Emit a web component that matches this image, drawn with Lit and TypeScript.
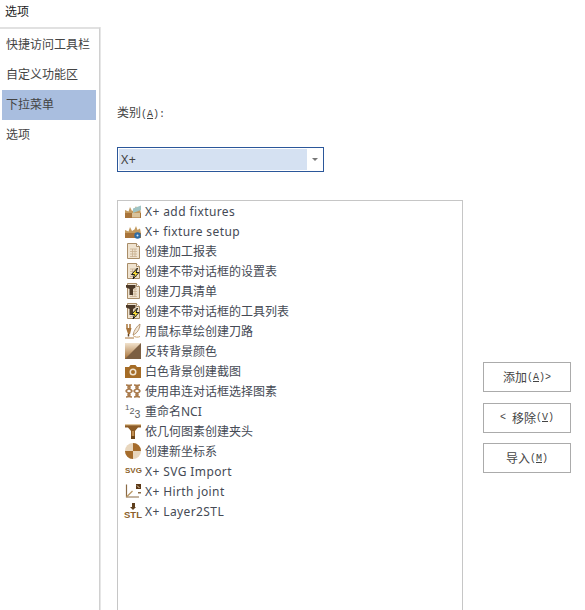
import { LitElement, html, css, svg } from "lit";
import { customElement } from "lit/decorators.js";

const B = "#a8743a", D = "#5f3f1c", T = "#c9a26c";
const doc = svg`<path d="M2.500 .5h9l3 3v12h-12z" fill="#efe3d0" stroke="#a98d68"/><path d="M11.500 .5v3h3" fill="#fff" stroke="#a98d68"/><path d="M5 6h7M5 8.500h7M5 11h7M5 13.500h7M7.500 6v8M10 6v8" stroke="#c8b090" stroke-width=".8"/>`;
const bolt = svg`<path d="M12.500 5l-6 6.500h3L8 16l6-6.500h-3z" fill="#ffe13a" stroke="#1c1c1c" stroke-width="1"/>`;
const tool = svg`<path d="M1 2h9.500v2.500L8 6v6H4.500V6L1 4.500z" fill="#4d3a28"/>`;
const box = svg`<path d="M0 15V7l3.500 1.500L5 4l2 4 2.500-1.500L11 3l1.500 4L15 5.500l1 5V15z" fill="#c39a5e"/><path d="M0 10h16v5H0z" fill="${B}"/>`;

const ICONS = [
  svg`${box}<path d="M8 5.500l8-3V7l-8 3z" fill="#9fc4c4"/><path d="M7 10h8v4.500H7z" fill="#d9c39a"/>`,
  svg`${box}<circle cx="12.500" cy="12.500" r="3.200" fill="#2e6da4"/><circle cx="12.500" cy="12.500" r="1" fill="#d7e6f2"/>`,
  doc,
  svg`${doc}${bolt}`,
  svg`${doc}${tool}`,
  svg`${doc}${tool}${bolt}`,
  svg`<path d="M2 1v4M5 1v4" stroke="${B}" stroke-width="1.500"/><path d="M1 5h5.500L5 11H3z" fill="${B}"/><path d="M3.500 11v2.500" stroke="${D}" stroke-width="1.500"/><path d="M0 15h9" stroke="${B}"/><path d="M8 12C9 7 12 3 15 1c0 4-2 8-5 10z" fill="#f3e7d6" stroke="#a9875e" stroke-width=".8"/><path d="M8 12.500c2 2 5 2 7 1" fill="none" stroke="${T}"/>`,
  svg`<defs><linearGradient id="g1" x1="0" y1="0" x2="0" y2="1"><stop offset="0" stop-color="#f1e2cd"/><stop offset="1" stop-color="#a56f35"/></linearGradient></defs><path d="M0 0h16v16H0z" fill="url(#g1)"/><path d="M16 0v16H0z" fill="#7c5f42"/>`,
  svg`<path d="M0 4h4l1.500-2h5L12 4h4v11H0z" fill="#a56c26"/><circle cx="8" cy="9" r="3.500" fill="#f0e3cf"/><circle cx="8" cy="9" r="2" fill="#a56c26"/>`,
  svg`<g fill="none" stroke="#a8794a" stroke-width="1.600"><path d="M1 2c3 0 4 1 4 2.500S1 6.500 1 8s4 2 4 3.500S3 14 1 14"/><path d="M7 2C4 2 3 3 3 4.500S7 6.500 7 8s-4 2-4 3.500S5 14 7 14"/><path d="M9 2c3 0 4 1 4 2.500S9 6.500 9 8s4 2 4 3.500S11 14 9 14"/><path d="M15 2c-3 0-4 1-4 2.500S15 6.500 15 8s-4 2-4 3.500 2 2.500 4 2.500"/></g>`,
  svg`<g fill="#5c5e62" font-family="Liberation Sans, sans-serif"><text x="0" y="7" font-size="8">1</text><text x="4.500" y="11" font-size="9">2</text><text x="9.500" y="15" font-size="10.500">3</text></g>`,
  svg`<path d="M0 1h16v3.500h-3L10 8v5.500H6V8L3 4.500H0z" fill="#8d5c26"/><path d="M0 1h16v1.300H0z" fill="#e2c79d"/><path d="M7 8h2v8H7z" fill="#c08e52"/><path d="M6 13h4v3H6z" fill="#6e4618"/>`,
  svg`<circle cx="8" cy="8" r="8" fill="#e8d6bd"/><path d="M8 0a8 8 0 0 1 8 8H8zM8 8v8a8 8 0 0 1-8-8z" fill="#a56c2c"/>`,
  null,
  svg`<path d="M1.500 1.500V14H14" fill="none" stroke="#8a6a45" stroke-width="1.200"/><path d="M1.500 14l6-6" stroke="#b99664" stroke-width="1.200"/><path d="M11 1h5v5h-5z" fill="#5b3714"/><path d="M12 2.500l2.500 2.500" stroke="#e9d6bb"/><path d="M13 9h3v1.500h-3z" fill="#8a6a45"/>`,
  null,
];

const ITEMS = [
  "X+ add fixtures", "X+ fixture setup", "创建加工报表", "创建不带对话框的设置表",
  "创建刀具清单", "创建不带对话框的工具列表", "用鼠标草绘创建刀路", "反转背景颜色",
  "白色背景创建截图", "使用串连对话框选择图素", "重命名NCI", "依几何图素创建夹头",
  "创建新坐标系", "X+ SVG Import", "X+ Hirth joint", "X+ Layer2STL",
];
const NAV = ["快捷访问工具栏", "自定义功能区", "下拉菜单", "选项"];

@customElement("app-root")
export class AppRoot extends LitElement {
  static styles = css`
    :host {
      display: flex; flex-direction: column; width: 585px; height: 610px; overflow: hidden;
      background: #fff; color: #444;
      font-family: "Noto Sans", "Noto Sans CJK SC", sans-serif; font-size: 12px;
    }
    .title { height: 27px; flex: none; padding-left: 5px; line-height: 23px; color: #222; }
    .body { flex: 1; display: flex; min-height: 0; }
    .side {
      width: 97px; flex: none; padding: 1px 0 0 2px;
      border-top: 2px solid #e1e1e1; border-right: 1px solid #d0d0d0; box-shadow: 1px 0 0 #e6e6e6;
    }
    .nav { width: 94px; height: 30px; line-height: 30px; padding-left: 4px; box-sizing: border-box; }
    .nav.sel { background: #a9bedf; }
    .main { width: 346px; margin-left: 17px; flex: none; }
    .label { margin-top: 76px; height: 20px; line-height: 20px; color: #444; }
    .u { font-family: "Liberation Mono", monospace; font-size: 10px; }
    .u b { font-weight: 400; text-decoration: underline; }
    .combo {
      margin-top: 24px; width: 207px; height: 25px; box-sizing: border-box; padding: 1px;
      border: 1px solid #2b579a; display: flex; align-items: stretch;
    }
    .combo-val { width: 186px; background: #d5e1f2; padding-left: 2px; line-height: 21px; font-size: 12.500px; letter-spacing: .5px; }
    .arrow { flex: 1; display: flex; align-items: center; justify-content: center; }
    .arrow i { border: 3px solid transparent; border-top: 3px solid #777; border-bottom: 0; }
    .list {
      margin-top: 28px; height: 410px; box-sizing: border-box; border: 1px solid #c6c6c6; border-bottom: 0;
    }
    .row { height: 20px; display: flex; align-items: center; padding-left: 7px; gap: 4px; white-space: nowrap; color: #454a55; }
    .row .latin { letter-spacing: .4px; }
    .row svg { width: 16px; height: 16px; flex: none; }
    .glyph { width: 16px; flex: none; color: #8b5f2a; font-weight: 700; line-height: 1; text-align: center; font-family: "Liberation Sans", sans-serif; }
    .g-svg { font-size: 8px; }
    .g-stl { font-size: 9.500px; display: flex; flex-direction: column; align-items: center; }
    .g-stl i { width: 3px; height: 4px; background: #5f3f1c; position: relative; margin-bottom: 3px; }
    .g-stl i::after { content: ""; position: absolute; left: -2px; top: 4px; border: 3.500px solid transparent; border-top: 3px solid #5f3f1c; border-bottom: 0; }
    .btns { margin: 335px 0 0 20px; display: flex; flex-direction: column; gap: 11px; }
    .btn {
      width: 88px; height: 30px; box-sizing: border-box; border: 1px solid #ababab; background: #fff;
      display: flex; align-items: center; justify-content: center; color: #444; font-size: 12px; white-space: pre;
    }
    .btn + .btn { margin-top: -.5px; }
  `;

  private icon(i: number) {
    if (i === 13) return html`<span class="glyph g-svg">SVG</span>`;
    if (i === 15) return html`<span class="glyph g-stl"><i></i>STL</span>`;
    return html`<svg viewBox="0 0 16 16">${ICONS[i]}</svg>`;
  }

  private key(k: string, tail = "") {
    return html`<span class="u">(<b>${k}</b>)${tail}</span>`;
  }

  render() {
    return html`
      <div class="title">选项</div>
      <div class="body">
        <div class="side">
          ${NAV.map((n, i) => html`<div class="nav ${i === 2 ? "sel" : ""}">${n}</div>`)}
        </div>
        <div class="main">
          <div class="label">类别${this.key("A", ":")}</div>
          <div class="combo">
            <div class="combo-val">X+</div>
            <div class="arrow"><i></i></div>
          </div>
          <div class="list">
            ${ITEMS.map((t, i) => html`<div class="row">${this.icon(i)}<span class=${t.startsWith("X+") ? "latin" : ""}>${t}</span></div>`)}
          </div>
        </div>
        <div class="btns">
          <div class="btn">添加${this.key("A", ">")}</div>
          <div class="btn"><span class="u">&lt; </span>移除${this.key("V")}</div>
          <div class="btn">导入${this.key("M")}</div>
        </div>
      </div>
    `;
  }
}
